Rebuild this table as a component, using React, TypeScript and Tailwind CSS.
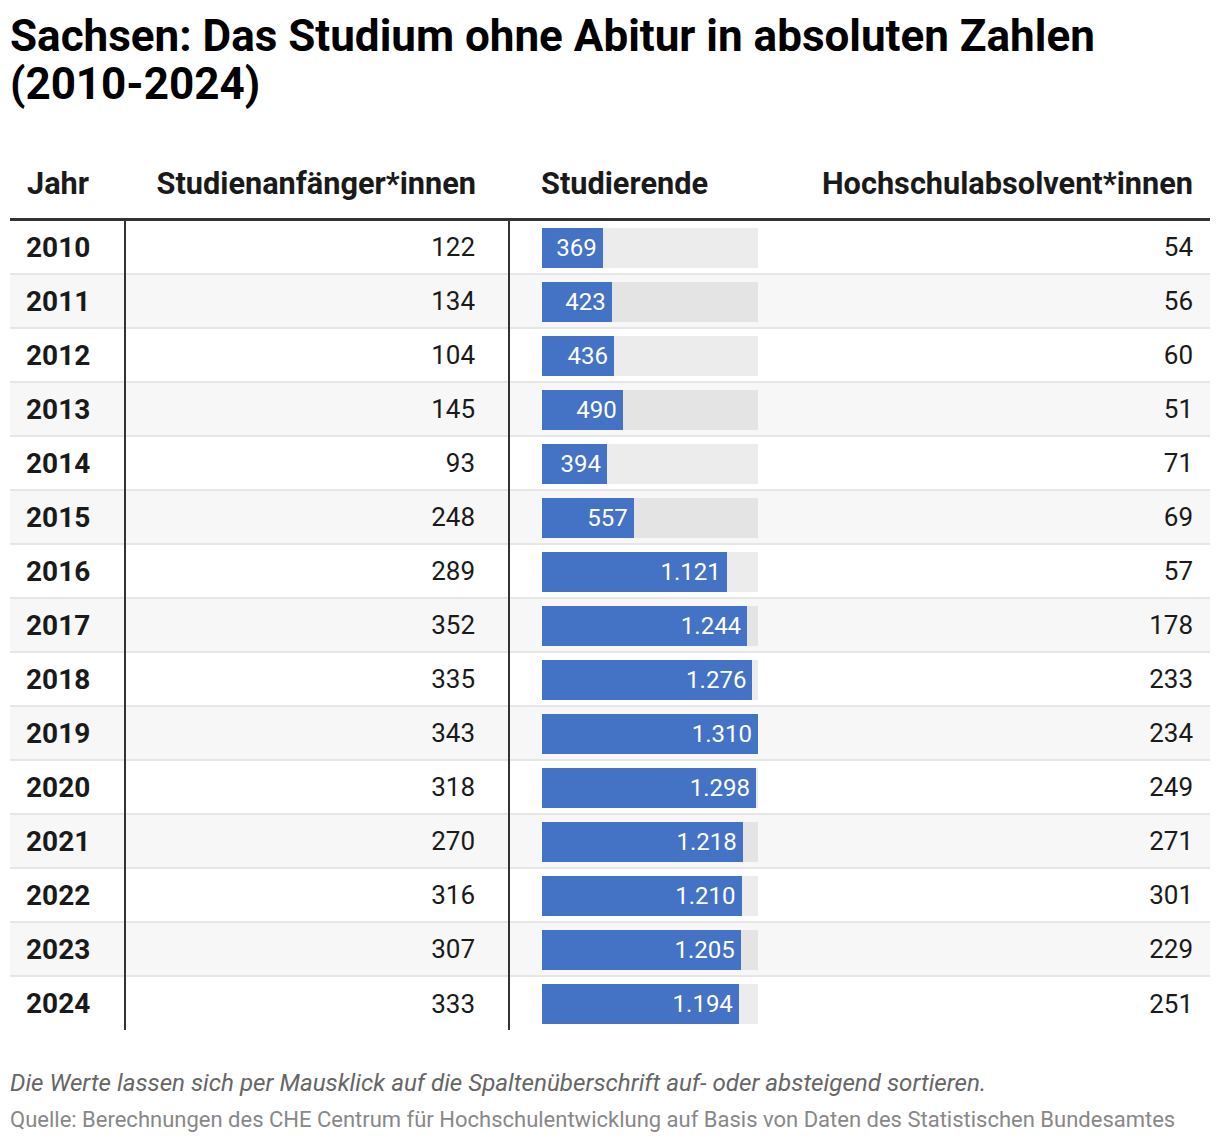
import React from 'react';

const rows = [
  { year: 2010, starters: 122, students: 369, grads: 54 },
  { year: 2011, starters: 134, students: 423, grads: 56 },
  { year: 2012, starters: 104, students: 436, grads: 60 },
  { year: 2013, starters: 145, students: 490, grads: 51 },
  { year: 2014, starters: 93, students: 394, grads: 71 },
  { year: 2015, starters: 248, students: 557, grads: 69 },
  { year: 2016, starters: 289, students: 1121, grads: 57 },
  { year: 2017, starters: 352, students: 1244, grads: 178 },
  { year: 2018, starters: 335, students: 1276, grads: 233 },
  { year: 2019, starters: 343, students: 1310, grads: 234 },
  { year: 2020, starters: 318, students: 1298, grads: 249 },
  { year: 2021, starters: 270, students: 1218, grads: 271 },
  { year: 2022, starters: 316, students: 1210, grads: 301 },
  { year: 2023, starters: 307, students: 1205, grads: 229 },
  { year: 2024, starters: 333, students: 1194, grads: 251 },
];

const maxStudents = 1310;

const fmt = (n: number) => n.toLocaleString('de-DE');

const App = () => {
  return (
    <div className="w-[1220px] bg-white px-[10px] pt-[12px] text-[#1a1a1a] font-['Roboto',sans-serif]">
      <h1 className="text-[44px] font-bold leading-[48px] text-black">
        Sachsen: Das Studium ohne Abitur in absoluten Zahlen (2010-2024)
      </h1>

      {/* Table */}
      <table className="mt-[58px] w-full border-collapse">
        <thead>
          <tr className="border-b-[3px] border-[#333333] text-[30.7px] font-bold leading-[35px]">
            <th className="w-[115px] pl-[17px] pb-[17px] text-left">Jahr</th>
            <th className="w-[384px] pr-[33px] pb-[17px] text-right">Studienanfänger*innen</th>
            <th className="w-[285px] pl-[32px] pb-[17px] text-left">Studierende</th>
            <th className="pr-[17px] pb-[17px] text-right">Hochschulabsolvent*innen</th>
          </tr>
        </thead>
        <tbody>
          {rows.map((r, i) => (
            <tr
              key={r.year}
              className={`h-[54px] text-[26px] ${i < rows.length - 1 ? 'border-b-2 border-[#e6e6e6]' : ''} ${i % 2 === 1 ? 'bg-[#f7f7f7]' : 'bg-white'}`}
            >
              <td className="border-r-2 border-r-[#333333] pl-[16px] pt-[2px] text-[28px] font-bold">{r.year}</td>
              <td className="border-r-2 border-r-[#333333] pr-[33px] pt-[2px] text-right">{r.starters}</td>
              <td className="pl-[32px] pt-[2px]">
                <div className="h-[40px] w-[216px] bg-black/[0.075]">
                  <div
                    className="flex h-full items-center justify-end bg-[#4472c4] pr-[6px] text-[24px] text-white"
                    style={{ width: `${(r.students / maxStudents) * 216}px` }}
                  >
                    {fmt(r.students)}
                  </div>
                </div>
              </td>
              <td className="pr-[17px] pt-[2px] text-right">{r.grads}</td>
            </tr>
          ))}
        </tbody>
      </table>

      <p className="mt-[39px] text-[24.2px] leading-[28px] italic text-[#666666]">
        Die Werte lassen sich per Mausklick auf die Spaltenüberschrift auf- oder absteigend sortieren.
      </p>
      <p className="mt-[10px] pb-[10px] text-[22px] leading-[26px] text-[#888888]">
        Quelle: Berechnungen des CHE Centrum für Hochschulentwicklung auf Basis von Daten des Statistischen Bundesamtes
      </p>
    </div>
  );
};

export default App;
